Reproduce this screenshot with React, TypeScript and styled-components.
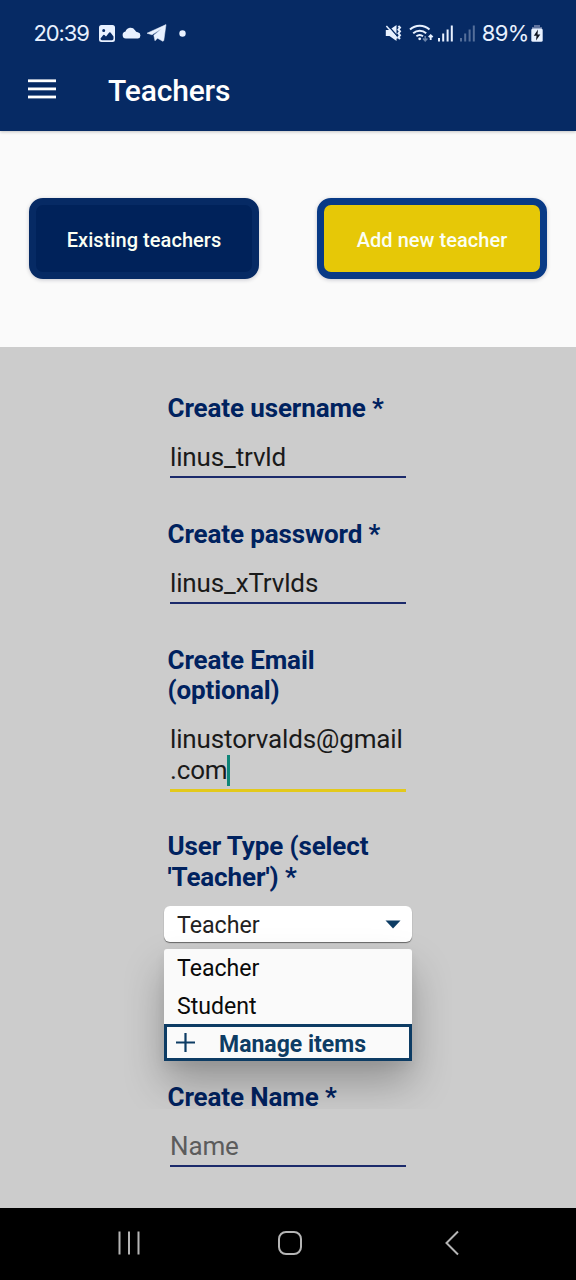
import React from 'react';
import styled, { createGlobalStyle } from 'styled-components';

const GlobalStyle = createGlobalStyle`
  *, *::before, *::after { box-sizing: border-box; }
  body { margin: 0; background: #000; }
`;

const Screen = styled.div`
  width: 576px;
  height: 1280px;
  display: flex;
  flex-direction: column;
  overflow: hidden;
  font-family: Roboto, 'Liberation Sans', sans-serif;
`;

const Header = styled.header`
  flex: none;
  height: 131px;
  background: #062a64;
  color: #fff;
  z-index: 1;
  box-shadow: 0 1px 3px rgba(0, 0, 0, 0.22);
`;

const StatusBar = styled.div`
  height: 66px;
  padding: 0 33px 0 33.5px;
  display: flex;
  align-items: center;
  justify-content: space-between;
  color: #e8f1ff;
`;

const StatusGroup = styled.div`
  display: flex;
  align-items: center;
  height: 24px;
`;

const StatusText = styled.span<{ $spacing: string; $gap?: number }>`
  margin: 0 0 1px ${(p) => p.$gap ?? 0}px;
  font: 400 22px/24px Inter, Roboto, sans-serif;
  letter-spacing: ${(p) => p.$spacing};
  white-space: nowrap;
`;

const StatusIcon = styled.svg<{ $gap: number }>`
  display: block;
  flex: none;
  margin-left: ${(p) => p.$gap}px;
`;

const AppBar = styled.div`
  display: flex;
  align-items: center;
  height: 50px;
  padding-left: 28px;
`;

const MenuButton = styled.button`
  width: 28px;
  height: 28px;
  margin: 0 52px 4px 0;
  padding: 0;
  border: 0;
  background: none;
`;

const Title = styled.h1`
  margin: 0;
  font-size: 30px;
  font-weight: 500;
  line-height: 36px;
  letter-spacing: -0.15px;
`;

const Tabs = styled.nav`
  flex: none;
  height: 216px;
  padding: 67.3px 29px 0;
  display: flex;
  justify-content: space-between;
  background: #fafafa;
`;

const TabButton = styled.button<{ $fill: string; $edge: string }>`
  width: 230px;
  height: 81px;
  padding: 3px 0 0;
  border: 7px solid ${(p) => p.$edge};
  border-radius: 14px;
  background: ${(p) => p.$fill};
  color: #fbfff4;
  font-family: inherit;
  font-size: 20px;
  font-weight: 500;
  letter-spacing: 0.05px;
  box-shadow: 0 1px 4px rgba(0, 0, 40, 0.2);
`;

const Form = styled.main`
  flex: 1;
  padding: 45.5px 164px 0;
  display: flex;
  flex-direction: column;
  gap: 40px;
  background: #ccc;
`;

const Field = styled.div`
  display: flex;
  flex-direction: column;
`;

const Label = styled.label`
  padding-left: 3.5px;
  font-size: 26px;
  font-weight: 700;
  line-height: 30.5px;
  letter-spacing: -0.12px;
  color: #00225f;
  white-space: nowrap;
`;

const Value = styled.div<{ $focused?: boolean; $hint?: boolean }>`
  margin: 18.5px 6px ${(p) => (p.$focused ? -1 : 1)}px;
  padding-bottom: ${(p) => (p.$focused ? 4 : 3.5)}px;
  border-bottom: ${(p) => (p.$focused ? '3px solid #e3c91b' : '2px solid #1b2a6b')};
  font-size: 26px;
  line-height: 30.5px;
  letter-spacing: -0.14px;
  color: ${(p) => (p.$hint ? '#5c5c5c' : '#1a1a1a')};
  white-space: nowrap;
`;

const Caret = styled.span`
  display: inline-block;
  width: 3px;
  height: 31px;
  margin: 0 0 -1px -1px;
  vertical-align: top;
  background: #0f8578;
`;

const SelectField = styled(Field)`
  position: relative;
  margin-bottom: 99.8px;
`;

const Select = styled.div`
  height: 36px;
  margin: 14px 0 0.5px;
  padding: 1px 11px 0 13px;
  display: flex;
  align-items: center;
  justify-content: space-between;
  border-radius: 6px;
  background: #fff;
  box-shadow: 0 1px 1px rgba(0, 0, 0, 0.5);
  font-size: 23.2px;
  color: #222;
`;

const Menu = styled.ul`
  position: absolute;
  top: 118px;
  left: 0;
  width: 248px;
  margin: 0;
  padding: 0;
  list-style: none;
  border-radius: 3px 3px 0 0;
  background: #fafafa;
  box-shadow: 0 22px 40px rgba(0, 0, 0, 0.27), 0 5px 12px rgba(0, 0, 0, 0.06);
  clip-path: inset(-30px -40px -48px);
`;

const Option = styled.li`
  height: 37.5px;
  padding: 3px 13px 0;
  font-size: 23.1px;
  line-height: 34px;
  color: #0a0a0a;
`;

const ManageItem = styled.li`
  height: 37px;
  padding: 3.5px 9px 0;
  display: flex;
  align-items: center;
  gap: 24px;
  border: 3px solid #0d3c64;
  font-size: 23px;
  font-weight: 700;
  color: #0d3c64;
  white-space: nowrap;
`;

const PlusIcon = styled.svg`
  margin-bottom: 4.5px;
`;

const NavBar = styled.footer`
  flex: none;
  height: 72px;
  padding: 0 116px 2px;
  display: flex;
  align-items: center;
  justify-content: space-between;
  background: #000;
`;

const SignalBars = ({ opacity, gap }: { opacity: number; gap: number }) => (
  <StatusIcon $gap={gap} width="15" height="17" viewBox="0 0 15 17" fill="currentColor" opacity={opacity}>
    <rect x="0" y="13" width="2" height="3.5" />
    <rect x="4.2" y="8.5" width="2" height="8" />
    <rect x="8.6" y="4.5" width="2" height="12" />
    <rect x="12.8" y="0.5" width="2" height="16" />
  </StatusIcon>
);

export default function App() {
  return (
    <Screen>
      <GlobalStyle />
      <Header>
        <StatusBar>
          <StatusGroup>
            <StatusText $spacing="-1.1px">20:39</StatusText>
            <StatusIcon $gap={10} width="16" height="17" viewBox="0 0 16 17">
              <path
                fill="currentColor"
                fillRule="evenodd"
                d="M2.5 0h11A2.5 2.5 0 0 1 16 2.5v12a2.5 2.5 0 0 1-2.5 2.5h-11A2.5 2.5 0 0 1 0 14.5v-12A2.5 2.5 0 0 1 2.5 0ZM4.7 4a1.5 1.5 0 1 0 0 3 1.5 1.5 0 0 0 0-3ZM1.5 13.5q0 1.7 1.5 1.7h10q1.5 0 1.5-1.7v-2L11.5 7.5q-.7-.7-1.3 0L7 11.5 5.5 10q-.6-.5-1.2 0Z"
              />
            </StatusIcon>
            <StatusIcon $gap={7} width="19" height="12" viewBox="0 0 19 12" fill="currentColor">
              <path d="M3.8 11.6A3.6 3.6 0 0 1 3.5 4.5 5.3 5.3 0 0 1 13 3.2Q14 5.3 15.8 5.3A3.2 3.2 0 0 1 15.8 11.6Z" />
            </StatusIcon>
            <StatusIcon $gap={6} width="20" height="18" viewBox="0 0 20 18" fill="currentColor">
              <path d="M0 9.2 19 .6 16.8 16.6 15.8 17.3 10.5 14.2 8 16.8 6.8 11.2 14.5 4.8 5 10.8Z" stroke="currentColor" strokeWidth="0.5" />
            </StatusIcon>
            <StatusIcon $gap={12.5} width="7" height="7" viewBox="0 0 7 7" fill="currentColor">
              <circle cx="3.5" cy="3.5" r="3.2" />
            </StatusIcon>
          </StatusGroup>
          <StatusGroup>
            <StatusIcon $gap={0} width="17" height="18" viewBox="0 0 17 18" fill="currentColor">
              <path d="M.8 6h3.4L11.5 1v16l-7-5H.8Z" />
              <path d="m2.7 1.2 12 13.5" stroke="#062a64" strokeWidth="1.3" />
              <path d="m1.4 2 11 12.5" stroke="currentColor" strokeWidth="1.5" />
              <path d="m13.4 2 1.6 1.6-1.6 2 1.6 1.8-1.6 2L15 11.2l-1.6 2 1.6 1.8" fill="none" stroke="currentColor" strokeWidth="2" />
            </StatusIcon>
            <StatusIcon $gap={7} width="25" height="18" viewBox="0 0 25 18" fill="none" stroke="currentColor" strokeWidth="2">
              <path d="M1 5.6a14.5 14.5 0 0 1 19.5 0M4.2 9.2a10 10 0 0 1 13 0M7.4 12.3a5.4 5.4 0 0 1 6.6 0" />
              <circle cx="10.7" cy="14.8" r="1.4" fill="currentColor" stroke="none" />
              <path d="M16.2 12v5M14 14.5l2.2 2.3 2.2-2.3" opacity="0.45" strokeWidth="1.5" />
              <path d="M21.7 16v-4.5M19.7 13.2l2-2 2 2" strokeWidth="1.8" />
            </StatusIcon>
            <SignalBars gap={4} opacity={1} />
            <SignalBars gap={7} opacity={0.35} />
            <StatusText $gap={7} $spacing="-0.6px">
              89%
            </StatusText>
            <StatusIcon $gap={2.3} width="12" height="17" viewBox="0 0 12 17">
              <path d="M3 0h6v2h2v2H1V2h2Z" fill="#60749f" />
              <rect x="0.3" y="3.5" width="11.4" height="13.2" rx="1.5" fill="currentColor" />
              <path d="M7 4.5 2.8 10.7h2.7L5 15.5l4.3-6H6.5Z" fill="#101522" />
            </StatusIcon>
          </StatusGroup>
        </StatusBar>
        <AppBar>
          <MenuButton aria-label="Menu">
            <svg width="28" height="28" viewBox="0 0 28 28" fill="#fff" display="block">
              <rect y="4.4" width="28" height="2.8" />
              <rect y="12.5" width="28" height="2.8" />
              <rect y="20.6" width="28" height="2.8" />
            </svg>
          </MenuButton>
          <Title>Teachers</Title>
        </AppBar>
      </Header>

      <Tabs>
        <TabButton $fill="#00225a" $edge="#062a64">Existing teachers</TabButton>
        <TabButton $fill="#e6c807" $edge="#083a86">Add new teacher</TabButton>
      </Tabs>

      <Form>
        <Field>
          <Label>Create username *</Label>
          <Value>linus_trvld</Value>
        </Field>
        <Field>
          <Label>Create password *</Label>
          <Value>linus_xTrvlds</Value>
        </Field>
        <Field>
          <Label>
            Create Email
            <br />
            (optional)
          </Label>
          <Value $focused>
            linustorvalds@gmail
            <br />
            .com
            <Caret />
          </Value>
        </Field>
        <SelectField>
          <Label>
            User Type (select
            <br />
            'Teacher') *
          </Label>
          <Select>
            Teacher
            <svg width="16" height="9" viewBox="0 0 16 9" fill="#0d3c64">
              <path d="M.5.5h15L8 8.5Z" />
            </svg>
          </Select>
          <Menu>
            <Option>Teacher</Option>
            <Option>Student</Option>
            <ManageItem>
              <PlusIcon width="19" height="19" viewBox="0 0 19 19" stroke="currentColor" strokeWidth="2.2">
                <path d="M9.5 0v19M0 9.5h19" />
              </PlusIcon>
              Manage items
            </ManageItem>
          </Menu>
        </SelectField>
        <Field>
          <Label>Create Name *</Label>
          <Value $hint>Name</Value>
        </Field>
      </Form>

      <NavBar>
        <svg width="25" height="26" viewBox="0 0 25 26" stroke="#b5b5b5" strokeWidth="2">
          <path d="M3.5 1.5v23M13 1.5v23M22.5 1.5v23" />
        </svg>
        <svg width="31" height="26" viewBox="0 0 31 26" fill="none" stroke="#b5b5b5" strokeWidth="2">
          <rect x="2" y="2" width="22" height="22" rx="7" />
        </svg>
        <svg width="16" height="26" viewBox="0 0 16 26" fill="none" stroke="#b5b5b5" strokeWidth="2">
          <path d="M14 1.5 2.5 13 14 24.5" />
        </svg>
      </NavBar>
    </Screen>
  );
}
